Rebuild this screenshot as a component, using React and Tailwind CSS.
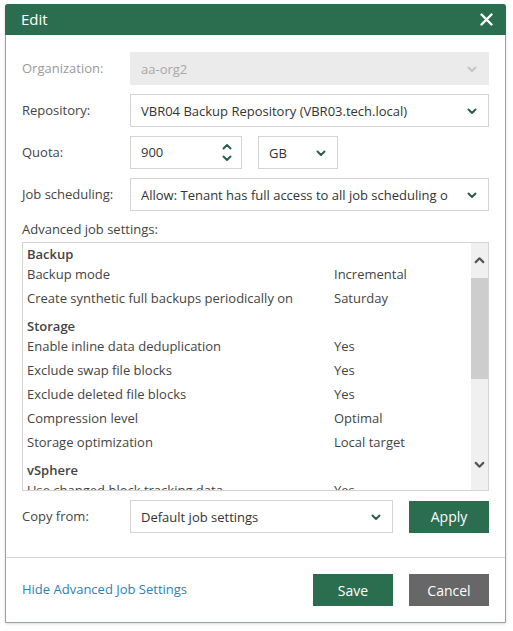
import React from "react";

const Chevron = ({ dir = "down", color = "#2b5f4a", size = 12 }) => (
  <svg width={size} height={size} viewBox="0 0 12 12" fill="none">
    <path
      d={dir === "down" ? "M2.5 4.5 L6 8 L9.5 4.5" : "M2.5 7.5 L6 4 L9.5 7.5"}
      stroke={color}
      strokeWidth="2"
      strokeLinecap="round"
      strokeLinejoin="round"
    />
  </svg>
);

const FieldRow = ({ label, disabled, children }) => (
  <div className="flex items-center mb-[9px]">
    <div className={`w-[108px] ${disabled ? "text-[#9a9a9a]" : "text-[#444]"}`}>{label}</div>
    {children}
  </div>
);

const Select = ({ value, disabled, className = "flex-1" }) => (
  <div
    className={`${className} h-[33px] flex items-center justify-between pl-[10px] pr-[10px] border ${
      disabled ? "bg-[#ebebeb] border-[#ebebeb] text-[#a8a8a8]" : "bg-white border-[#d4d4d4] text-[#333]"
    }`}
  >
    <span className="whitespace-nowrap overflow-hidden leading-[22px]">{value}</span>
    <Chevron color={disabled ? "#c4c4c4" : "#2b5f4a"} />
  </div>
);

const settings = [
  { header: "Backup" },
  { label: "Backup mode", value: "Incremental" },
  { label: "Create synthetic full backups periodically on", value: "Saturday" },
  { header: "Storage" },
  { label: "Enable inline data deduplication", value: "Yes" },
  { label: "Exclude swap file blocks", value: "Yes" },
  { label: "Exclude deleted file blocks", value: "Yes" },
  { label: "Compression level", value: "Optimal" },
  { label: "Storage optimization", value: "Local target" },
  { header: "vSphere" },
  { label: "Use changed block tracking data", value: "Yes" },
];

export default function App() {
  return (
    <div className="w-[513px] h-[631px] bg-white pt-[4px] pl-[5px] text-[13px] font-['Open_Sans',sans-serif]">
      <div className="w-[501px] h-[619px] border border-[#8eaa9d] rounded-t-[3px] flex flex-col bg-white shadow-[0_1px_3px_rgba(0,0,0,0.15)]">
        {/* header */}
        <div className="h-[31px] bg-[#2b6e4f] flex items-center justify-between pl-[16px] pr-[13px] -mt-px -mx-px rounded-t-[3px]">
          <span className="text-white text-[15px]">Edit</span>
          <svg width="13" height="13" viewBox="0 0 13 13">
            <path d="M1.5 1.5 L11.5 11.5 M11.5 1.5 L1.5 11.5" stroke="#fff" strokeWidth="2.4" strokeLinecap="round" />
          </svg>
        </div>

        <div className="flex-1 px-[16px] pt-[17px]">
          <FieldRow label="Organization:" disabled>
            <Select value="aa-org2" disabled />
          </FieldRow>
          <FieldRow label="Repository:">
            <Select value="VBR04 Backup Repository (VBR03.tech.local)" />
          </FieldRow>
          <FieldRow label="Quota:">
            <div className="w-[112px] h-[33px] border border-[#d4d4d4] flex items-center justify-between pl-[10px] pr-[8px] text-[#333]">
              <span>900</span>
              <div className="flex flex-col items-center -space-y-[1px]">
                <Chevron dir="up" size={12} />
                <Chevron dir="down" size={12} />
              </div>
            </div>
            <Select value="GB" className="w-[80px] ml-[16px]" />
          </FieldRow>
          <FieldRow label="Job scheduling:">
            <Select value="Allow: Tenant has full access to all job scheduling o" />
          </FieldRow>

          <div className="text-[#444] mt-[8px] mb-[4px] leading-[18px]">Advanced job settings:</div>

          <div className="h-[249px] border border-[#d4d4d4] flex overflow-hidden">
            <div className="flex-1 pl-[4px] pt-[1px] overflow-hidden">
              {settings.map((s, i) =>
                s.header ? (
                  <div key={i} className={`h-5 leading-5 font-semibold text-[#444] ${i === 0 ? "" : "mt-1"}`}>
                    {s.header}
                  </div>
                ) : (
                  <div key={i} className="h-6 leading-5 flex text-[#444]">
                    <span className="w-[307px] whitespace-nowrap">{s.label}</span>
                    <span>{s.value}</span>
                  </div>
                )
              )}
            </div>
            <div className="w-[17px] bg-[#f0f0f0] flex flex-col items-center">
              <div className="h-[35px] flex items-center justify-center">
                <Chevron dir="up" color="#555" size={13} />
              </div>
              <div className="w-full h-[101px] bg-[#cdcdcd]" />
              <div className="flex-1" />
              <div className="h-[36px] flex items-start justify-center pt-[4px]">
                <Chevron dir="down" color="#555" size={13} />
              </div>
            </div>
          </div>

          <div className="flex items-center mt-[9px]">
            <div className="w-[108px] text-[#444]">Copy from:</div>
            <Select value="Default job settings" className="w-[263px]" />
            <button className="ml-[16px] w-[80px] h-[32px] bg-[#2b6e4f] text-white text-[14px]">Apply</button>
          </div>
        </div>

        <div className="border-t border-[#d2d8d5] h-[65px] flex items-center px-[16px]">
          <span className="text-[#2f7fb5] flex-1">Hide Advanced Job Settings</span>
          <button className="w-[80px] h-[32px] bg-[#2b6e4f] text-white text-[14px]">Save</button>
          <button className="ml-[16px] w-[80px] h-[32px] bg-[#676767] text-white text-[14px]">Cancel</button>
        </div>
      </div>
    </div>
  );
}
